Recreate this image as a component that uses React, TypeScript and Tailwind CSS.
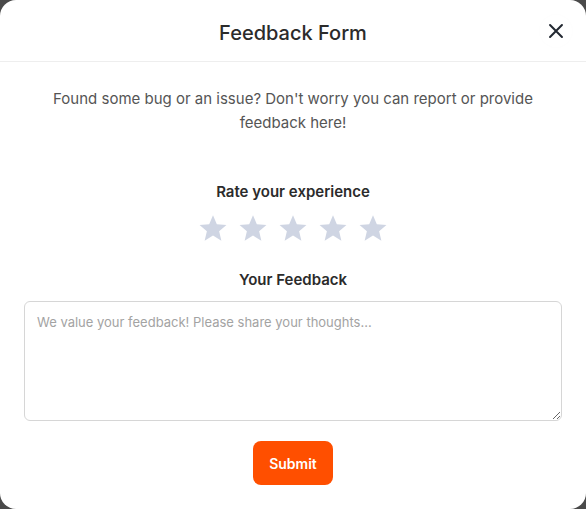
import { useState } from 'react'

const STARS = [1, 2, 3, 4, 5]

function Star({ filled }: { filled: boolean }) {
  return (
    <svg viewBox="0 0 24 24" className="w-[30px] h-[30px]" fill={filled ? '#f5b300' : '#cfd5e3'}>
      <path d="M12 1.8l3.05 7.1 7.7.6-5.85 5.05 1.8 7.55L12 18.05 5.3 22.1l1.8-7.55L1.25 9.5l7.7-.6z" />
    </svg>
  )
}

export default function App() {
  const [rating, setRating] = useState(0)
  const [text, setText] = useState('')

  return (
    <div className="min-h-screen bg-[#4a4a4a]" style={{ fontFamily: 'Inter, "Noto Sans", sans-serif' }}>
      <div className="h-[509px] bg-white rounded-2xl flex flex-col">
        {/* Header */}
        <div className="relative h-[62px] pt-[4px] flex items-center justify-center border-b border-[#eeeeee]">
          <h1 className="text-[20px] font-medium text-[#2b2b2b]">Feedback Form</h1>
          <button className="absolute right-[14px] top-[15px] w-8 h-8 rounded-full flex items-center justify-center shadow-[0_0_3px_rgba(0,0,0,0.02)] text-[#222831]">
            <svg viewBox="0 0 24 24" className="w-[22px] h-[22px]" fill="none" stroke="currentColor" strokeWidth="2.2" strokeLinecap="round">
              <path d="M5.5 5.5l13 13M18.5 5.5l-13 13" />
            </svg>
          </button>
        </div>

        {/* Body */}
        <div className="flex flex-col items-center px-6">
          <p className="mt-[25px] text-center text-[15px] leading-6 text-[#555555] px-2">
            Found some bug or an issue? Don't worry you can report or provide feedback here!
          </p>

          <h2 className="mt-[46px] text-[15px] font-semibold text-[#2b2b2b]">Rate your experience</h2>
          <div className="mt-[9px] flex gap-[10px]">
            {STARS.map(n => (
              <button key={n} onClick={() => setRating(n)}>
                <Star filled={n <= rating} />
              </button>
            ))}
          </div>

          <h2 className="mt-[26px] text-[15px] font-semibold text-[#2b2b2b]">Your Feedback</h2>
          <textarea
            value={text}
            onChange={e => setText(e.target.value)}
            placeholder="We value your feedback! Please share your thoughts..."
            className="mt-[10px] w-full h-[120px] rounded-md border border-[#d6d6d6] px-3 py-[11px] text-[13px] text-[#333] placeholder:text-[#a3a3a3] outline-none"
          />

          <button className="mt-[20px] w-[80px] h-[44px] rounded-lg bg-[#ff4f00] text-white text-[14px] font-semibold">
            Submit
          </button>
        </div>
      </div>
    </div>
  )
}
